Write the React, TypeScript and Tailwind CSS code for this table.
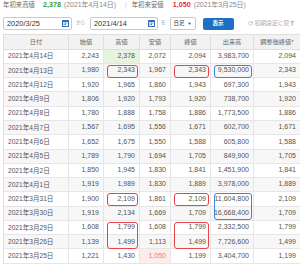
import { RotateCw } from "lucide-react";

const rows = [
  ["2021年4月14日", "2,243", "2,378", "2,072", "2,094", "3,983,700", "2,094"],
  ["2021年4月13日", "1,980", "2,343", "1,967", "2,343", "9,530,000", "2,343"],
  ["2021年4月12日", "1,920", "1,965", "1,860", "1,943", "697,300", "1,943"],
  ["2021年4月9日", "1,806", "1,920", "1,793", "1,920", "738,700", "1,920"],
  ["2021年4月8日", "1,780", "1,888", "1,758", "1,886", "1,773,500", "1,886"],
  ["2021年4月7日", "1,567", "1,695", "1,556", "1,671", "602,700", "1,671"],
  ["2021年4月6日", "1,652", "1,675", "1,550", "1,588", "605,800", "1,588"],
  ["2021年4月5日", "1,789", "1,790", "1,694", "1,705", "849,900", "1,705"],
  ["2021年4月2日", "1,850", "1,945", "1,830", "1,841", "1,451,900", "1,841"],
  ["2021年4月1日", "1,919", "1,989", "1,830", "1,889", "3,978,000", "1,889"],
  ["2021年3月31日", "1,900", "2,109", "1,861", "2,109", "11,604,800", "2,109"],
  ["2021年3月30日", "1,919", "2,134", "1,669", "1,709", "16,668,400", "1,709"],
  ["2021年3月29日", "1,608", "1,799", "1,608", "1,799", "2,332,500", "1,799"],
  ["2021年3月26日", "1,139", "1,499", "1,113", "1,499", "7,726,600", "1,499"],
  ["2021年3月25日", "1,221", "1,430", "1,050", "1,199", "3,404,700", "1,199"],
];

const headers = ["日付", "始値", "高値", "安値", "終値", "出来高", "調整後終値*"];

// 注釈の枠: [行, 列, 行数, 色]
const marks: [number, number, number, "red" | "blue"][] = [
  [1, 2, 1, "red"],
  [1, 4, 1, "red"],
  [1, 5, 1, "blue"],
  [10, 2, 1, "red"],
  [10, 4, 1, "red"],
  [10, 5, 2, "blue"],
  [12, 2, 2, "red"],
  [12, 4, 2, "red"],
];

const grid = "grid grid-cols-[65px_35px_36px_31px_40px_43px_47px]";

function CalendarIcon() {
  return (
    <svg width="7" height="7" viewBox="0 0 7 7" className="shrink-0">
      <rect x="0" y="0" width="7" height="7" rx="0.6" fill="#2f6db5" />
      <rect x="1" y="2" width="5" height="4" fill="#ffffff" />
      <rect x="1.6" y="2.6" width="1" height="1" fill="#2f6db5" />
      <rect x="3" y="2.6" width="1" height="1" fill="#2f6db5" />
      <rect x="4.4" y="2.6" width="1" height="1" fill="#2f6db5" />
      <rect x="1.6" y="4.1" width="1" height="1" fill="#2f6db5" />
      <rect x="3" y="4.1" width="1" height="1" fill="#2f6db5" />
    </svg>
  );
}

function DateInput({ value, width }: { value: string; width: string }) {
  return (
    <div className={`${width} shrink-0 h-[13px] border border-[#c9c9c9] rounded-[2px] bg-white flex items-center justify-between pl-[3px] pr-[2px]`}>
      <span className="text-[7.4px] text-[#333]">{value}</span>
      <CalendarIcon />
    </div>
  );
}

export default function App() {
  return (
    <div
      className="w-[300px] h-[267px] bg-white overflow-hidden text-[#555] whitespace-nowrap"
      style={{ fontFamily: '"Liberation Sans", "Noto Sans CJK JP", sans-serif' }}
    >
      <div className="h-[10px] pl-[3px] flex items-center text-[6.4px] text-[#666]">
        <span>年初来高値</span>
        <span className="ml-[8px] text-[7.2px] font-bold text-[#3c9a34]">2,378</span>
        <span className="ml-[3px] text-[6.9px] text-[#888]">(2021年4月14日)</span>
        <span className="ml-[9px] text-[#ccc]">|</span>
        <span className="ml-[5px]">年初来安値</span>
        <span className="ml-[9px] text-[7.2px] font-bold text-[#e5322d]">1,050</span>
        <span className="ml-[3px] text-[6.9px] text-[#888]">(2021年3月25日)</span>
      </div>

      <div className="mt-[7px] pl-[3px] flex items-center text-[6.3px]">
        <DateInput value="2020/3/25" width="w-[69px]" />
        <span className="ml-[4px] text-[4.5px] text-[#999]">から</span>
        <div className="ml-[5px] shrink-0">
          <DateInput value="2021/4/14" width="w-[68px]" />
        </div>
        <span className="ml-[3px] text-[4.5px] text-[#999]">を</span>
        <div className="ml-[4px] shrink-0 w-[26px] h-[13px] border border-[#c9c9c9] rounded-[2px] flex items-center justify-center gap-[3px] text-[#333] text-[5.5px]">
          <span>日足</span>
          <span className="text-[4px]">▼</span>
        </div>
        <div className="ml-[7px] shrink-0 w-[31px] h-[12px] bg-[#1f6fc5] rounded-[2px] flex items-center justify-center text-white font-bold text-[5.5px]">
          表示
        </div>
        <div className="ml-[14px] flex items-center gap-[2px] text-[#aaa] text-[5.8px]">
          <RotateCw className="w-[5px] h-[5px]" strokeWidth={2.5} />
          <span>初期設定に戻す</span>
        </div>
      </div>

      <div className="mt-[4px] ml-[3px] border-l border-t border-[#dedede] text-[7px]">
        <div className={`${grid} h-[14.7px] bg-[#f2f2f2] border-b border-[#dedede]`}>
          {headers.map((h) => (
            <div key={h} className="flex items-center justify-center border-r border-[#dedede] text-[#666] text-[6.2px]">
              {h}
            </div>
          ))}
        </div>
        {rows.map((r, i) => (
          <div
            key={r[0]}
            className={`${grid} h-[14.27px] border-b border-[#e6e6e6] ${i % 2 === 1 ? "bg-[#f7f7f7]" : "bg-white"}`}
          >
            {r.map((c, j) => {
              const mark = marks.find((m) => m[0] === i && m[1] === j);
              let cls = "relative flex items-center border-r border-[#e6e6e6] text-[#555] ";
              if (j === 0) cls += "justify-start pl-[4px] text-[6.6px]";
              else cls += "justify-end pr-[4px]";
              if (i === 0 && j === 2) cls += " bg-[#e6f3de] text-[#52a844]";
              if (i === 14 && j === 3) cls += " bg-[#fdecec] text-[#f07b7b]";
              return (
                <div key={j} className={cls}>
                  {c}
                  {mark && (
                    <div
                      className={`absolute z-10 left-[3px] right-[1px] top-[1px] rounded-[3px] border-[1.5px] ${
                        mark[3] === "red" ? "border-[#e8434a]" : "border-[#3b86cf]"
                      } ${mark[2] === 2 ? "h-[27px]" : "h-[13px]"}`}
                    />
                  )}
                </div>
              );
            })}
          </div>
        ))}
      </div>
    </div>
  );
}
